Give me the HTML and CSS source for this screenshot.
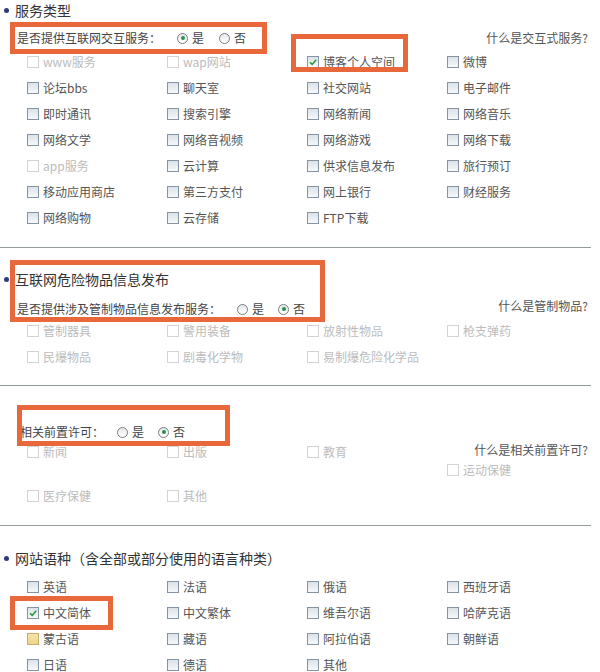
FILE: index.html
```html
<!DOCTYPE html>
<html lang="zh-CN">
<head>
<meta charset="utf-8">
<title>服务类型</title>
<link rel="stylesheet" href="styles.css">
</head>
<body>
<div class="page">
  <section class="sec s1">
    <div class="title"><span class="dot"></span>服务类型</div>
    <div class="q">
      <span class="qt">是否提供互联网交互服务：</span>
      <span class="opt first"><span class="rd on"></span>是</span>
      <span class="opt"><span class="rd"></span>否</span>
      <span class="link">什么是交互式服务?</span>
    </div>
    <div class="grid">
      <span class="it dis"><span class="cb"></span>www服务</span>
      <span class="it dis"><span class="cb"></span>wap网站</span>
      <span class="it"><span class="cb"><svg viewBox="0 0 10 10"><path d="M2 5.2 L4.2 7.4 L8.2 2.8"/></svg></span>博客个人空间</span>
      <span class="it"><span class="cb"></span>微博</span>
      <span class="it"><span class="cb"></span>论坛bbs</span>
      <span class="it"><span class="cb"></span>聊天室</span>
      <span class="it"><span class="cb"></span>社交网站</span>
      <span class="it"><span class="cb"></span>电子邮件</span>
      <span class="it"><span class="cb"></span>即时通讯</span>
      <span class="it"><span class="cb"></span>搜索引擎</span>
      <span class="it"><span class="cb"></span>网络新闻</span>
      <span class="it"><span class="cb"></span>网络音乐</span>
      <span class="it"><span class="cb"></span>网络文学</span>
      <span class="it"><span class="cb"></span>网络音视频</span>
      <span class="it"><span class="cb"></span>网络游戏</span>
      <span class="it"><span class="cb"></span>网络下载</span>
      <span class="it dis"><span class="cb"></span>app服务</span>
      <span class="it"><span class="cb"></span>云计算</span>
      <span class="it"><span class="cb"></span>供求信息发布</span>
      <span class="it"><span class="cb"></span>旅行预订</span>
      <span class="it"><span class="cb"></span>移动应用商店</span>
      <span class="it"><span class="cb"></span>第三方支付</span>
      <span class="it"><span class="cb"></span>网上银行</span>
      <span class="it"><span class="cb"></span>财经服务</span>
      <span class="it"><span class="cb"></span>网络购物</span>
      <span class="it"><span class="cb"></span>云存储</span>
      <span class="it"><span class="cb"></span>FTP下载</span>
    </div>
  </section>
  <div class="sep"></div>

  <section class="sec s2">
    <div class="title"><span class="dot"></span>互联网危险物品信息发布</div>
    <div class="q">
      <span class="qt">是否提供涉及管制物品信息发布服务：</span>
      <span class="opt first"><span class="rd"></span>是</span>
      <span class="opt"><span class="rd on"></span>否</span>
      <span class="link up">什么是管制物品?</span>
    </div>
    <div class="grid">
      <span class="it dis"><span class="cb"></span>管制器具</span>
      <span class="it dis"><span class="cb"></span>警用装备</span>
      <span class="it dis"><span class="cb"></span>放射性物品</span>
      <span class="it dis"><span class="cb"></span>枪支弹药</span>
      <span class="it dis"><span class="cb"></span>民爆物品</span>
      <span class="it dis"><span class="cb"></span>剧毒化学物</span>
      <span class="it dis"><span class="cb"></span>易制爆危险化学品</span>
    </div>
  </section>
  <div class="sep"></div>

  <section class="sec s3">
    <div class="q">
      <span class="qt">相关前置许可：</span>
      <span class="opt first"><span class="rd"></span>是</span>
      <span class="opt"><span class="rd on"></span>否</span>
    </div>
    <div class="grid g3">
      <span class="it dis"><span class="cb"></span>新闻</span>
      <span class="it dis"><span class="cb"></span>出版</span>
      <span class="it dis"><span class="cb"></span>教育</span>
      <div class="col4">
        <span class="link">什么是相关前置许可?</span>
        <span class="it dis"><span class="cb"></span>运动保健</span>
      </div>
      <span class="it dis"><span class="cb"></span>医疗保健</span>
      <span class="it dis"><span class="cb"></span>其他</span>
    </div>
  </section>
  <div class="sep"></div>

  <section class="sec s4">
    <div class="title"><span class="dot"></span>网站语种（含全部或部分使用的语言种类）</div>
    <div class="grid">
      <span class="it"><span class="cb"></span>英语</span>
      <span class="it"><span class="cb"></span>法语</span>
      <span class="it"><span class="cb"></span>俄语</span>
      <span class="it"><span class="cb"></span>西班牙语</span>
      <span class="it"><span class="cb"><svg viewBox="0 0 10 10"><path d="M2 5.2 L4.2 7.4 L8.2 2.8"/></svg></span>中文简体</span>
      <span class="it"><span class="cb"></span>中文繁体</span>
      <span class="it"><span class="cb"></span>维吾尔语</span>
      <span class="it"><span class="cb"></span>哈萨克语</span>
      <span class="it"><span class="cb hov"></span>蒙古语</span>
      <span class="it"><span class="cb"></span>藏语</span>
      <span class="it"><span class="cb"></span>阿拉伯语</span>
      <span class="it"><span class="cb"></span>朝鲜语</span>
      <span class="it"><span class="cb"></span>日语</span>
      <span class="it"><span class="cb"></span>德语</span>
      <span class="it"><span class="cb"></span>其他</span>
    </div>
  </section>

  <div class="mark m1"></div>
  <div class="mark m2"></div>
  <div class="mark m3"></div>
  <div class="mark m4"></div>
  <div class="mark m5"></div>
</div>
</body>
</html>
```

FILE: styles.css
```css
body {
  margin: 0;
  background: #fff;
  font-family: "Noto Sans CJK SC", "Microsoft YaHei", sans-serif;
  font-size: 12px;
  color: #555;
}

.page {
  position: relative;
  width: 591px;
}

.title {
  display: flex;
  align-items: center;
  height: 20px;
  line-height: 20px;
  padding-left: 4px;
  font-size: 14px;
  color: #333;
}

.dot {
  width: 5px;
  height: 5px;
  border-radius: 50%;
  background: #2b3a78;
  margin-right: 6px;
  flex: none;
}

.q {
  display: flex;
  align-items: center;
  height: 20px;
  line-height: 20px;
  padding-left: 17px;
  color: #444;
}

.opt {
  display: flex;
  align-items: center;
  gap: 4px;
  margin-left: 15px;
}

.opt.first {
  margin-left: 16px;
}

.link {
  margin-left: auto;
  padding-right: 3px;
  color: #555;
  line-height: 20px;
}

.link.up {
  position: relative;
  top: -3px;
}

.rd {
  position: relative;
  width: 11px;
  height: 11px;
  box-sizing: border-box;
  border: 1px solid #7d7d7d;
  border-radius: 50%;
  background: linear-gradient(#e4e8ec, #fff);
}

.rd.on::after {
  content: "";
  position: absolute;
  left: 2.5px;
  top: 2.5px;
  width: 4px;
  height: 4px;
  border-radius: 50%;
  background: #2d8e46;
}

.grid {
  display: grid;
  grid-template-columns: 140px 140px 140px 1fr;
  grid-auto-rows: 26px;
  padding-left: 27px;
}

.it {
  display: flex;
  align-items: center;
  gap: 4px;
  line-height: 20px;
}

.cb {
  display: flex;
  align-items: center;
  justify-content: center;
  width: 12px;
  height: 12px;
  box-sizing: border-box;
  border: 1px solid #8494a3;
  background: linear-gradient(#dbe2e9, #f6f8fa);
  flex: none;
}

.cb svg {
  width: 10px;
  height: 10px;
}

.cb svg path {
  fill: none;
  stroke: #279a3a;
  stroke-width: 1.6;
}

.cb.hov {
  border-color: #c5ad6e;
  background: linear-gradient(#f6e3a6, #efd58a);
}

.dis {
  color: #bcbcbc;
}

.dis .cb {
  border-color: #d3d3d3;
  background: #fff;
}

.sep {
  height: 1px;
  background: #939b9b;
}

/* section vertical rhythm */
.s1 .q { margin-top: 8px; }
.s1 .grid { margin-top: 1px; }
.s1 { padding-bottom: 16px; }

.s2 .title { margin-top: 21px; }
.s2 .q { margin-top: 11px; height: 18px; }
.s2 .opt.first { margin-left: 16px; }
.s2 .opt { margin-left: 14px; }
.s2 { padding-bottom: 15px; }

.s3 .q { margin-top: 36px; padding-left: 20px; }
.s3 .opt.first { margin-left: 13px; }
.s3 .opt { margin-left: 14px; }
.s3 { padding-bottom: 19px; }

.g3 {
  grid-template-rows: 44px 20px;
  grid-auto-rows: 20px;
}

.g3 > .it {
  align-self: start;
  height: 20px;
}

.col4 {
  display: flex;
  flex-direction: column;
  margin-top: -2px;
}

.col4 .link {
  align-self: flex-end;
}

.s4 .title { margin-top: 22px; }
.s4 .grid { margin-top: 6px; }

/* annotation highlight boxes */
.mark {
  position: absolute;
  box-sizing: border-box;
  border: 5px solid #e8683c;
  pointer-events: none;
}

.m1 { left: 10px; top: 22px; width: 257px; height: 32px; }
.m2 { left: 291px; top: 34px; width: 117px; height: 38px; }
.m3 { left: 10px; top: 260px; width: 315px; height: 62px; }
.m4 { left: 17px; top: 405px; width: 213px; height: 41px; }
.m5 { left: 10px; top: 596px; width: 103px; height: 34px; }
```
